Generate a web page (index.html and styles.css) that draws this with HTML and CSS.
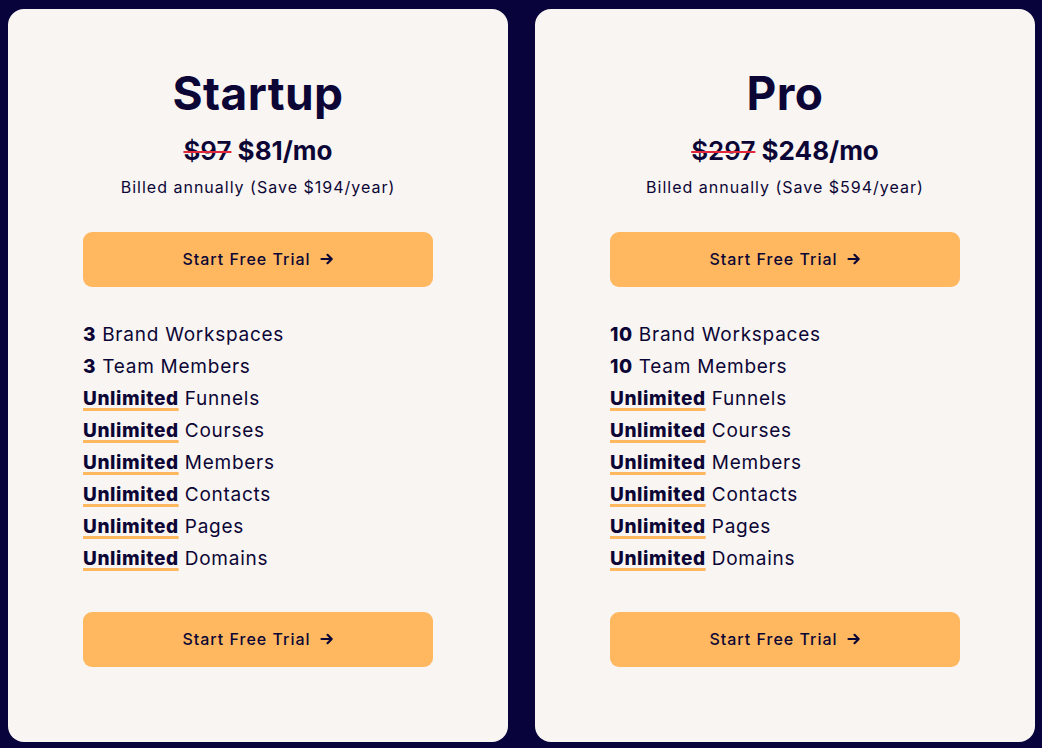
FILE: index.html
```html
<!DOCTYPE html>
<html>
<head>
<meta charset="utf-8">
<link rel="stylesheet" href="styles.css">
</head>
<body>
<div class="plans">
  <div class="card">
    <h2 class="name">Startup</h2>
    <div class="price"><span class="old">$97</span> $81/mo</div>
    <div class="billed">Billed annually (Save $194/year)</div>
    <a class="btn" href="#">Start Free Trial <svg class="arrow" viewBox="0 0 14 14" width="14" height="14"><path d="M1.5 7h10M7.5 2.8 11.7 7l-4.2 4.2" fill="none" stroke="currentColor" stroke-width="2.2" stroke-linecap="round" stroke-linejoin="round"/></svg></a>
    <ul class="features">
      <li><b>3</b> Brand Workspaces</li>
      <li><b>3</b> Team Members</li>
      <li><b class="u">Unlimited</b> Funnels</li>
      <li><b class="u">Unlimited</b> Courses</li>
      <li><b class="u">Unlimited</b> Members</li>
      <li><b class="u">Unlimited</b> Contacts</li>
      <li><b class="u">Unlimited</b> Pages</li>
      <li><b class="u">Unlimited</b> Domains</li>
    </ul>
    <a class="btn" href="#">Start Free Trial <svg class="arrow" viewBox="0 0 14 14" width="14" height="14"><path d="M1.5 7h10M7.5 2.8 11.7 7l-4.2 4.2" fill="none" stroke="currentColor" stroke-width="2.2" stroke-linecap="round" stroke-linejoin="round"/></svg></a>
  </div>
  <div class="card">
    <h2 class="name">Pro</h2>
    <div class="price"><span class="old">$297</span> $248/mo</div>
    <div class="billed">Billed annually (Save $594/year)</div>
    <a class="btn" href="#">Start Free Trial <svg class="arrow" viewBox="0 0 14 14" width="14" height="14"><path d="M1.5 7h10M7.5 2.8 11.7 7l-4.2 4.2" fill="none" stroke="currentColor" stroke-width="2.2" stroke-linecap="round" stroke-linejoin="round"/></svg></a>
    <ul class="features">
      <li><b>10</b> Brand Workspaces</li>
      <li><b>10</b> Team Members</li>
      <li><b class="u">Unlimited</b> Funnels</li>
      <li><b class="u">Unlimited</b> Courses</li>
      <li><b class="u">Unlimited</b> Members</li>
      <li><b class="u">Unlimited</b> Contacts</li>
      <li><b class="u">Unlimited</b> Pages</li>
      <li><b class="u">Unlimited</b> Domains</li>
    </ul>
    <a class="btn" href="#">Start Free Trial <svg class="arrow" viewBox="0 0 14 14" width="14" height="14"><path d="M1.5 7h10M7.5 2.8 11.7 7l-4.2 4.2" fill="none" stroke="currentColor" stroke-width="2.2" stroke-linecap="round" stroke-linejoin="round"/></svg></a>
  </div>
</div>
</body>
</html>
```
FILE: styles.css
```css
html, body {
  margin: 0;
  padding: 0;
  background: #08033a;
}
body {
  font-family: Inter, "Noto Sans", sans-serif;
  color: #0c0636;
}
.plans {
  display: flex;
  gap: 27px;
  padding: 9px 7px 6px 8px;
}
.card {
  width: 500px;
  box-sizing: border-box;
  background: #f9f5f2;
  border-radius: 16px;
  padding: 56px 75px 75px;
  display: flex;
  flex-direction: column;
  align-items: stretch;
}
.name {
  margin: 0;
  font-size: 46px;
  line-height: 57px;
  font-weight: 700;
  text-align: center;
  letter-spacing: 0.4px;
}
.price {
  margin-top: 13px;
  font-size: 26px;
  line-height: 32px;
  font-weight: 700;
  text-align: center;
}
.old {
  font-weight: 600;
  text-decoration: line-through;
  text-decoration-color: #e3283c;
  text-decoration-thickness: 2px;
}
.billed {
  margin-top: 8px;
  font-size: 16px;
  line-height: 24px;
  text-align: center;
  letter-spacing: 1px;
}
.btn {
  display: flex;
  align-items: center;
  justify-content: center;
  gap: 9px;
  height: 55px;
  box-sizing: border-box;
  padding-bottom: 2px;
  margin-top: 33px;
  background: #ffb85f;
  border-radius: 9px;
  color: #0c0636;
  text-decoration: none;
  font-size: 16px;
  font-weight: 500;
  letter-spacing: 1px;
}
.arrow {
  display: block;
}
.features {
  list-style: none;
  margin: 32px 0 0;
  padding: 0;
}
.features li {
  font-size: 19px;
  line-height: 32px;
  letter-spacing: 0.75px;
}
.features b {
  font-weight: 800;
  letter-spacing: 0.6px;
}
.features .u {
  text-decoration: underline;
  text-decoration-color: #ffb85f;
  text-decoration-thickness: 3px;
  text-underline-offset: 3px;
  text-decoration-skip-ink: none;
}
.features + .btn {
  margin-top: 37px;
}
```
